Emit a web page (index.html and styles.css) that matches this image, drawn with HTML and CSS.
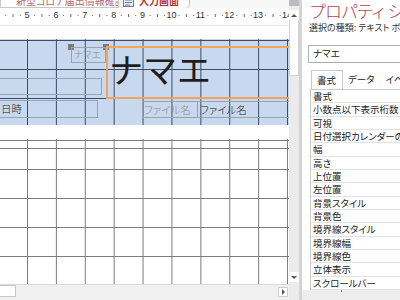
FILE: index.html
```html
<!DOCTYPE html>
<html lang="ja">
<head>
    <meta charset="UTF-8">
    <title>フォーム デザイン</title>
    <link rel="stylesheet" href="styles.css">
</head>
<body>
    <div class="app">
        <div class="designer">
            <div class="doc-tabs">
                <div class="doc-tab first"><span>新型コロナ届出情報確認表</span></div>
                <div class="doc-tab active">
                    <svg class="tab-icon" width="11" height="11" viewBox="0 0 11 11">
                        <rect x="0.5" y="0.5" width="10" height="10" fill="#e8eef6" stroke="#6b7d95"/>
                        <line x1="2" y1="4" x2="9" y2="4" stroke="#6b7d95"/>
                        <line x1="2" y1="6.5" x2="9" y2="6.5" stroke="#6b7d95"/>
                        <line x1="2" y1="9" x2="7" y2="9" stroke="#6b7d95"/>
                    </svg>
                    <span>入力画面</span>
                </div>
                <div class="doc-fill"></div>
                <div class="doc-corner"></div>
            </div>
            <div class="workspace">
                <div class="canvas">
                    <div class="ruler">
                        <span>5</span><span>6</span><span>7</span><span>8</span><span>9</span>
                        <span>10</span><span>11</span><span>12</span><span>13</span><span>14</span>
                    </div>
                    <div class="band top"></div>
                    <div class="section detail">
                        <div class="ctl textbox wide"></div>
                        <div class="ctl label date">日時</div>
                        <div class="handle h1"></div>
                        <div class="handle h2"></div>
                        <div class="ctl label name">ナマエ</div>
                        <div class="ctl textbox selected">ナマエ</div>
                        <div class="ctl label file">ファイル名</div>
                        <div class="ctl textbox file-box">ファイル名</div>
                    </div>
                    <div class="band bottom"></div>
                    <div class="section footer"></div>
                    <div class="hscroll">
                        <div class="nav-box"></div>
                        <div class="hscroll-track"></div>
                        <div class="arrow-btn right"><i></i></div>
                    </div>
                </div>
                <div class="vscroll">
                    <div class="vscroll-track">
                        <div class="arrow-btn up"><i></i></div>
                        <div class="thumb"></div>
                        <div class="spacer"></div>
                        <div class="arrow-btn down"><i></i></div>
                    </div>
                    <div class="corner"></div>
                </div>
            </div>
        </div>

        <aside class="props">
            <div class="props-title">プロパティ シート</div>
            <div class="props-kind">選択の種類: テキスト ボックス</div>
            <div class="props-combo">ナマエ</div>
            <div class="props-tabs">
                <span class="on">書式</span>
                <span>データ</span>
                <span>イベント</span>
            </div>
            <div class="props-grid">
                <div class="row">書式</div>
                <div class="row">小数点以下表示桁数</div>
                <div class="row">可視</div>
                <div class="row">日付選択カレンダーの表示</div>
                <div class="row">幅</div>
                <div class="row">高さ</div>
                <div class="row">上位置</div>
                <div class="row">左位置</div>
                <div class="row">背景スタイル</div>
                <div class="row">背景色</div>
                <div class="row">境界線スタイル</div>
                <div class="row">境界線幅</div>
                <div class="row">境界線色</div>
                <div class="row">立体表示</div>
                <div class="row">スクロールバー</div>
            </div>
            <div class="props-foot"><i></i></div>
        </aside>
    </div>
</body>
</html>
```
FILE: styles.css
```css
* {
    box-sizing: border-box;
}

body {
    margin: 0;
    width: 400px;
    height: 300px;
    overflow: hidden;
    background: #fff;
    color: #222;
    font-family: "Noto Sans CJK JP", sans-serif;
    font-feature-settings: "palt";
}

.app {
    display: flex;
    height: 300px;
}

.designer {
    width: 299px;
    display: flex;
    flex-direction: column;
}

/* document tabs, only their lower edge is in view */
.doc-tabs {
    height: 8px;
    display: flex;
    background: #eceef1;
    overflow: hidden;
}

.doc-tab {
    height: 8px;
    overflow: hidden;
    white-space: nowrap;
    background: #fff;
    font-size: 10px;
    line-height: 10px;
}

.doc-tab span {
    display: block;
    height: 10px;
    margin-top: -4px;
}

.doc-tab.first {
    width: 119px;
    padding-left: 15px;
    border: 1px solid #c9c9c9;
    border-top: none;
    color: #b56c6c;
}

.doc-tab.active {
    width: 68px;
    margin-left: 3px;
    padding-left: 1px;
    display: flex;
    align-items: flex-start;
    gap: 5px;
    border-right: 1px solid #c4c4c4;
    border-bottom-right-radius: 5px;
    color: #b03434;
    font-weight: bold;
}

.tab-icon {
    flex: none;
    margin-top: -4px;
}

.doc-fill {
    flex: 1;
    background: #f7f7f7;
}

.doc-corner {
    width: 10px;
    background: #b9bcc1;
    margin-bottom: 2px;
}

.workspace {
    flex: 1;
    display: flex;
}

.canvas {
    width: 289px;
    display: flex;
    flex-direction: column;
    overflow: hidden;
}

/* ruler: dots on quarters, ticks on halves */
.ruler {
    height: 18px;
    display: flex;
    padding-left: 12.55px;
    padding-top: 2px;
    border-bottom: 1px solid #e4e4e4;
    background-image:
        linear-gradient(to right, #666 1px, transparent 1px),
        linear-gradient(to right, #666 1px, transparent 1px);
    background-size: 14.45px 1px, 28.9px 3px;
    background-position: 34.2px 7px, 41.45px 6px;
    background-repeat: repeat-x;
    font-family: "Liberation Sans", sans-serif;
    font-size: 9px;
    line-height: 10px;
    color: #333;
    white-space: nowrap;
}

.ruler span {
    flex: none;
    width: 28.9px;
    text-align: center;
}

.band.top {
    height: 13px;
}

.band.bottom {
    height: 14px;
}

.section {
    position: relative;
    overflow: hidden;
}

.detail {
    height: 86px;
    background-color: #c8d8ee;
    background-image:
        linear-gradient(to right, #3e4c66 1px, transparent 1px),
        linear-gradient(to bottom, #3e4c66 1px, transparent 1px);
    background-size: 28.9px 29px;
    background-position: 27px 1px;
}

.footer {
    height: 145px;
    background-color: #fff;
    background-image:
        linear-gradient(to right, #7d7d7d 1px, transparent 1px),
        linear-gradient(to bottom, #7d7d7d 1px, transparent 1px),
        linear-gradient(#7d7d7d, #7d7d7d);
    background-size: 28.9px 29px, 28.9px 29px, 100% 1px;
    background-position: 27px 1px, 27px 1px, 0 9px;
    background-repeat: repeat, repeat, no-repeat;
}

/* controls placed on the design canvas */
.ctl {
    position: absolute;
    height: 17px;
    border: 1px solid #98a2b0;
    font-size: 10.5px;
    font-weight: 300;
    line-height: 15px;
    white-space: nowrap;
    overflow: hidden;
}

.label {
    color: #8b8b8b;
}

.textbox {
    color: #222;
}

.wide {
    left: -2px;
    top: 39px;
    width: 104px;
}

.date {
    left: -2px;
    top: 61px;
    width: 100px;
    height: 18px;
    padding-left: 2px;
    color: #222;
}

.name {
    left: 71px;
    top: 8px;
    width: 35px;
    height: 16px;
    padding-left: 2px;
    font-size: 9.5px;
    line-height: 13px;
}

.file {
    left: 142px;
    top: 62px;
    width: 56px;
    padding-left: 1px;
}

.file-box {
    left: 197px;
    top: 62px;
    width: 110px;
    padding-left: 2px;
}

.selected {
    left: 106px;
    top: 7px;
    width: 200px;
    height: 53px;
    border: 2px solid #f0a656;
    padding-left: 1px;
    font-size: 34px;
    font-weight: normal;
    font-feature-settings: normal;
    line-height: 41px;
    color: #1e1e1e;
}

.handle {
    position: absolute;
    top: 5px;
    width: 6px;
    height: 6px;
    background: #7b7b7b;
}

.h1 {
    left: 68px;
}

.h2 {
    left: 103px;
}

/* scroll bars */
.hscroll {
    height: 16px;
    display: flex;
    align-items: flex-start;
    background: #f0f0f0;
    border-top: 1px solid #dadada;
}

.nav-box {
    width: 16px;
    height: 12px;
    background: #fff;
    border: 1px solid #c6c6c6;
    border-left: none;
}

.hscroll-track {
    flex: 1;
}

.arrow-btn {
    width: 10px;
    height: 10px;
    background: #fff;
    border: 1px solid #cdcdcd;
    display: flex;
    align-items: center;
    justify-content: center;
}

.arrow-btn i {
    width: 0;
    height: 0;
    border: 3px solid transparent;
}

.arrow-btn.right {
    margin: 2px 1px 0 0;
}

.arrow-btn.right i {
    border-left: 3px solid #555;
    border-right: none;
}

.arrow-btn.up i {
    border-bottom: 3px solid #555;
    border-top: none;
}

.arrow-btn.down i {
    border-top: 3px solid #555;
    border-bottom: none;
}

.vscroll {
    width: 10px;
    display: flex;
    flex-direction: column;
}

.vscroll-track {
    flex: 1;
    display: flex;
    flex-direction: column;
    padding: 2px 0 2px;
    background: #ebebeb;
}

.vscroll .arrow-btn {
    width: 10px;
    border: none;
}

.thumb {
    height: 56px;
    background: #fff;
    border: 1px solid #d2d2d2;
    border-top: none;
}

.spacer {
    flex: 1;
}

.corner {
    height: 16px;
    background: #ececec;
}

/* property sheet */
.props {
    width: 101px;
    border-left: 3px solid #d4d4d4;
    display: flex;
    flex-direction: column;
    white-space: nowrap;
    overflow: hidden;
}

.props-title {
    height: 22px;
    padding: 1px 0 0 8px;
    font-size: 17px;
    font-weight: 300;
    line-height: 20px;
    letter-spacing: -0.3px;
    color: #b0464f;
}

.props-kind {
    height: 12px;
    padding-left: 7px;
    font-size: 9px;
    line-height: 12px;
    color: #333;
}

.props-combo {
    height: 18px;
    margin: 11px 0 0 6px;
    padding-left: 4px;
    border: 1px solid #abadb3;
    border-right: none;
    font-size: 9.5px;
    line-height: 14px;
}

.props-tabs {
    height: 19px;
    margin-top: 7px;
    padding-left: 9px;
    display: flex;
    align-items: stretch;
    font-size: 9.5px;
    line-height: 18px;
}

.props-tabs span {
    padding: 0 6px 0 5px;
}

.props-tabs .on {
    width: 33px;
    border: 1px solid #c9c9c9;
    border-bottom: none;
    background: #fff;
}

.props-grid {
    margin-left: 8px;
    border-top: 1px solid #c9c9c9;
    border-left: 1px solid #c9c9c9;
}

.row {
    height: 13.33px;
    padding-left: 2px;
    border-bottom: 1px solid #e2e2e2;
    font-size: 9.5px;
    line-height: 12px;
    overflow: hidden;
}

.props-foot {
    flex: 1;
    position: relative;
    background: #ededed;
}

.props-foot i {
    position: absolute;
    left: 39px;
    top: 0;
    width: 1px;
    height: 2px;
    background: #777;
}
```
